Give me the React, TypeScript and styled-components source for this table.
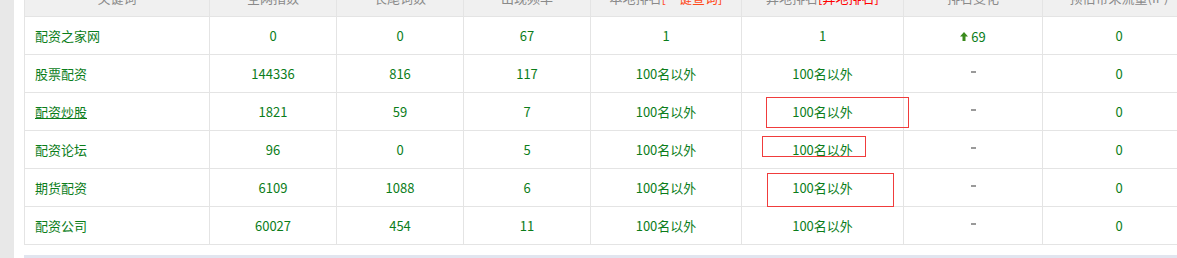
import React from "react";
import styled, { createGlobalStyle } from "styled-components";

const Global = createGlobalStyle`
  html, body { margin: 0; padding: 0; overflow: hidden; }
  body {
    background: #e8e8e8;
    font-family: "Microsoft YaHei", "Noto Sans CJK SC", "Noto Sans", sans-serif;
  }
`;

const Page = styled.div`
  display: flex;
  height: 258px;
  overflow: hidden;
`;

const Side = styled.div`
  width: 14px;
  flex: none;
  background: #e8e8e8;
`;

const Panel = styled.div`
  flex: none;
  width: 1200px;
  background: #fff;
  padding-left: 10px;
  margin-top: -22px;
  position: relative;
`;

const Table = styled.table`
  border-collapse: collapse;
  table-layout: fixed;
  width: 1171px;
  font-size: 13px;
`;

const Th = styled.th<{ $w: number }>`
  width: ${(p) => p.$w}px;
  height: 37px;
  background: #f0f0f0;
  border: 1px solid #e4e4e4;
  color: #8a8a8a;
  font-weight: normal;
  text-align: center;
  padding: 0;
  white-space: nowrap;
`;

const Red = styled.span<{ $c: string }>`
  color: ${(p) => p.$c};
`;

const Td = styled.td<{ $left?: boolean }>`
  height: 37px;
  border: 1px solid #e4e4e4;
  color: #0b7d1a;
  text-align: ${(p) => (p.$left ? "left" : "center")};
  padding: 0 0 0 ${(p) => (p.$left ? "10px" : "0")};
  white-space: nowrap;
`;

const Link = styled.a`
  color: #0b7d1a;
  text-decoration: underline;
`;

const Dash = styled.span`
  display: inline-block;
  width: 5px;
  height: 2px;
  background: #9a9a9a;
  vertical-align: middle;
  position: relative;
  top: -3px;
`;

const Up = styled.span`
  display: inline-flex;
  align-items: center;
  gap: 3px;
`;

const Bar = styled.div`
  margin-top: 10px;
  height: 10px;
  background: #e1e5ef;
`;

const Mark = styled.div`
  position: absolute;
  border: 1px solid #f03c3c;
  box-sizing: border-box;
`;

const cols = [184, 126, 126, 126, 150, 161, 138, 152];

type Row = {
  kw: string;
  link?: boolean;
  a: string;
  b: string;
  c: string;
  d: string;
  e: string;
  chg: string | null;
  ip: string;
};

const rows: Row[] = [
  { kw: "配资之家网", a: "0", b: "0", c: "67", d: "1", e: "1", chg: "69", ip: "0" },
  { kw: "股票配资", a: "144336", b: "816", c: "117", d: "100名以外", e: "100名以外", chg: null, ip: "0" },
  { kw: "配资炒股", link: true, a: "1821", b: "59", c: "7", d: "100名以外", e: "100名以外", chg: null, ip: "0" },
  { kw: "配资论坛", a: "96", b: "0", c: "5", d: "100名以外", e: "100名以外", chg: null, ip: "0" },
  { kw: "期货配资", a: "6109", b: "1088", c: "6", d: "100名以外", e: "100名以外", chg: null, ip: "0" },
  { kw: "配资公司", a: "60027", b: "454", c: "11", d: "100名以外", e: "100名以外", chg: null, ip: "0" },
];

const Arrow = () => (
  <svg width="8" height="9" viewBox="0 0 8 9">
    <path d="M4 0 L8 4.5 L5.5 4.5 L5.5 9 L2.5 9 L2.5 4.5 L0 4.5 Z" fill="#3a8a1c" />
  </svg>
);

export default function App() {
  return (
    <>
      <Global />
      <Page>
        <Side />
        <Panel>
          <Table>
            <thead>
              <tr>
                <Th $w={cols[0]}>关键词</Th>
                <Th $w={cols[1]}>全网指数</Th>
                <Th $w={cols[2]}>长尾词数</Th>
                <Th $w={cols[3]}>出现频率</Th>
                <Th $w={cols[4]}>
                  本地排名<Red $c="#ff4a1a">[一键查询]</Red>
                </Th>
                <Th $w={cols[5]}>
                  异地排名<Red $c="#ff0000">[异地排名]</Red>
                </Th>
                <Th $w={cols[6]}>排名变化</Th>
                <Th $w={cols[7]}>预估带来流量(IP)</Th>
              </tr>
            </thead>
            <tbody>
              {rows.map((r) => (
                <tr key={r.kw}>
                  <Td $left>{r.link ? <Link>{r.kw}</Link> : r.kw}</Td>
                  <Td>{r.a}</Td>
                  <Td>{r.b}</Td>
                  <Td>{r.c}</Td>
                  <Td>{r.d}</Td>
                  <Td>{r.e}</Td>
                  <Td>
                    {r.chg ? (
                      <Up>
                        <Arrow />
                        {r.chg}
                      </Up>
                    ) : (
                      <Dash />
                    )}
                  </Td>
                  <Td>{r.ip}</Td>
                </tr>
              ))}
            </tbody>
          </Table>
          <Bar />
          <Mark style={{ left: 752, top: 119, width: 143, height: 31 }} />
          <Mark style={{ left: 748, top: 158, width: 104, height: 21 }} />
          <Mark style={{ left: 753, top: 195, width: 127, height: 34 }} />
        </Panel>
      </Page>
    </>
  );
}
